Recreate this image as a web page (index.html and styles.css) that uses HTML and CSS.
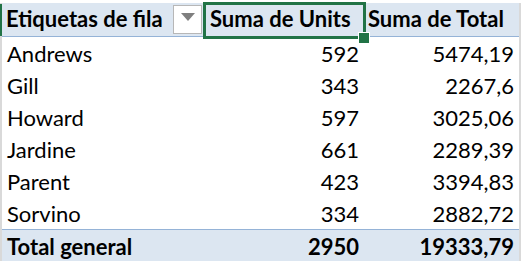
FILE: index.html
```html
<!DOCTYPE html>
<html>
<head>
<meta charset="utf-8">
<link rel="stylesheet" href="styles.css">
</head>
<body>
<div class="sheet">
  <div class="grid">
    <div class="row head">
      <div class="cell c1">Etiquetas de fila<span class="dd"><svg width="14" height="8" viewBox="0 0 14 8"><polygon points="0,0 14,0 7,8" fill="#7f7f7f"/></svg></span></div>
      <div class="cell c2 sel">Suma de Units<span class="selbox"></span><span class="handle"></span></div>
      <div class="cell c3">Suma de Total</div>
    </div>
    <div class="row"><div class="cell c1">Andrews</div><div class="cell c2 num">592</div><div class="cell c3 num">5474,19</div></div>
    <div class="row"><div class="cell c1">Gill</div><div class="cell c2 num">343</div><div class="cell c3 num">2267,6</div></div>
    <div class="row"><div class="cell c1">Howard</div><div class="cell c2 num">597</div><div class="cell c3 num">3025,06</div></div>
    <div class="row"><div class="cell c1">Jardine</div><div class="cell c2 num">661</div><div class="cell c3 num">2289,39</div></div>
    <div class="row"><div class="cell c1">Parent</div><div class="cell c2 num">423</div><div class="cell c3 num">3394,83</div></div>
    <div class="row"><div class="cell c1">Sorvino</div><div class="cell c2 num">334</div><div class="cell c3 num">2882,72</div></div>
    <div class="row total"><div class="cell c1">Total general</div><div class="cell c2 num">2950</div><div class="cell c3 num">19333,79</div></div>
  </div>
</div>
</body>
</html>
```

FILE: styles.css
```css
html, body {
  margin: 0;
  padding: 0;
  background: #ffffff;
}
.sheet {
  width: 523px;
  height: 261px;
  overflow: hidden;
  padding-top: 3px;
  box-sizing: border-box;
  font-family: "Lato", "Liberation Sans", sans-serif;
  font-size: 22px;
  color: #000;
}
.grid {
  width: 521px;
  border-left: 2px solid #d9d9d9;
  border-right: 2px solid #d9d9d9;
  box-sizing: border-box;
  position: relative;
}
.row {
  display: grid;
  grid-template-columns: 201px 162px 154px;
  height: 32px;
  align-items: center;
}
.cell {
  padding: 0 5px;
  white-space: nowrap;
  height: 32px;
  display: flex;
  align-items: center;
  box-sizing: border-box;
  position: relative;
}
.num { justify-content: flex-end; padding-right: 6px; }
.c3.num { padding-right: 5px; }
.head {
  background: #dce6f1;
  font-weight: bold;
  border-bottom: 1px solid #95b3d7;
  height: 33px;
}
.head .cell { padding-bottom: 2px; }
.head .c1::before {
  content: "";
  position: absolute;
  left: -2px;
  top: 0;
  width: 2px;
  height: 32px;
  background: #217346;
}
.head .c1 { padding-left: 4px; }
.dd {
  position: absolute;
  left: 171px;
  top: 1px;
  width: 29px;
  height: 29px;
  border: 1px solid #b7b7b7;
  background: #ffffff;
  display: flex;
  align-items: center;
  justify-content: center;
  box-sizing: border-box;
}
.dd svg { margin-top: -4px; }
.head .c3 { padding-left: 3px; }
.head .c2 { padding-left: 7px; }
.selbox {
  position: absolute;
  left: 0;
  top: -2px;
  width: 163px;
  height: 37px;
  border: 3px solid #217346;
  box-sizing: border-box;
}
.handle {
  position: absolute;
  left: 155px;
  top: 28px;
  width: 10px;
  height: 10px;
  background: #217346;
  border: 1px solid #ffffff;
}
.total {
  background: #dce6f1;
  font-weight: bold;
  border-top: 1px solid #95b3d7;
  height: 33px;
}
```
